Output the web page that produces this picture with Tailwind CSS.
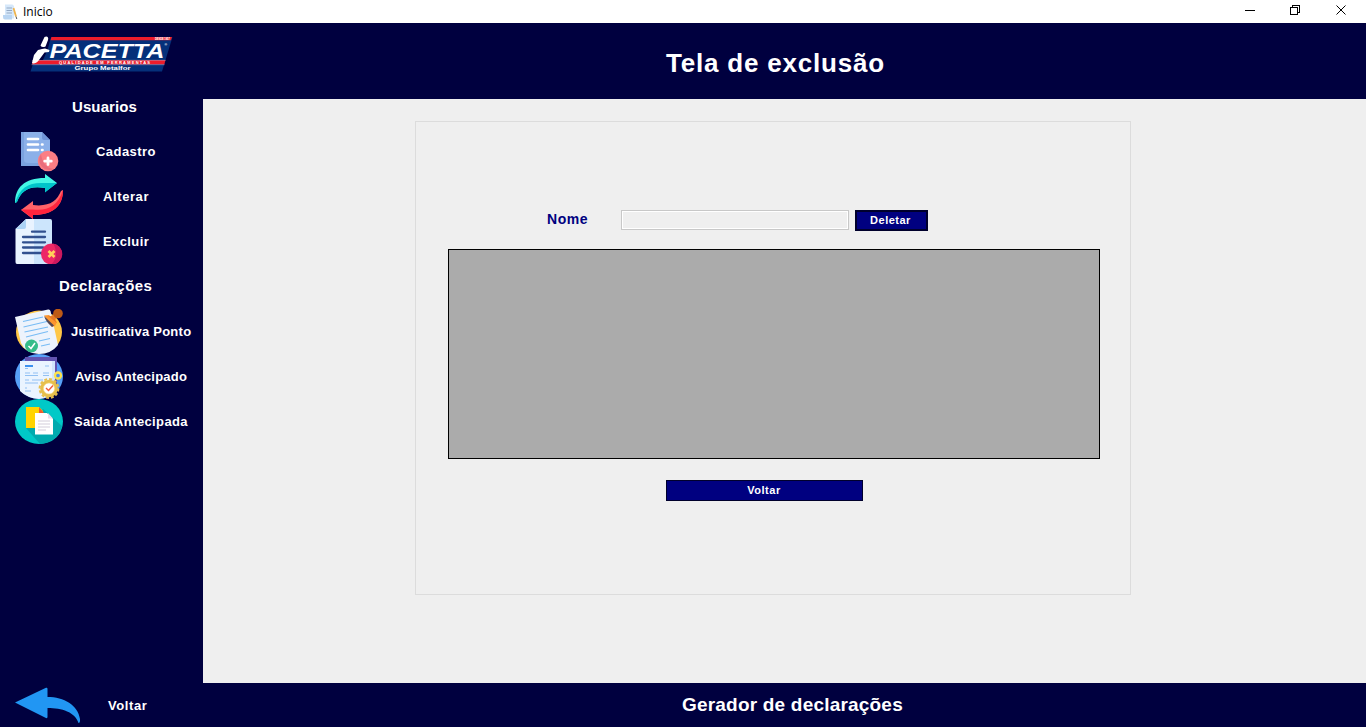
<!DOCTYPE html>
<html lang="pt-BR">
<head>
<meta charset="utf-8">
<title>Inicio</title>
<script src="https://cdn.jsdelivr.net/npm/@tailwindcss/browser@4"></script>
</head>
<body class="w-[1366px] h-[727px] overflow-hidden flex flex-col bg-[#00003f] text-white font-bold font-['Liberation_Sans',sans-serif]">
<!-- Title bar -->
<div class="h-[23px] shrink-0 bg-white flex items-center text-black font-normal">
  <svg class="ml-[2px] w-4 h-4" viewBox="0 0 16 16"><path d="M3 .5H10.500L12 2V14.500H3Z" fill="#d6e8fa"/><path d="M1 11H10V15.500H3Q1 15.500 1 13Z" fill="#b9d5f2"/><path d="M4.500 4H10M4.500 6.500H10M4.500 9H10" stroke="#94a9c4" stroke-width="1"/><path d="M11.500 4 14 12.500" stroke="#efb550" stroke-width="1.800"/><path d="M14 12.500 14.800 15" stroke="#555" stroke-width="1"/></svg>
  <span class="ml-[5px] text-[12px] leading-4 font-['Open_Sans',sans-serif]">Inicio</span>
  <svg class="ml-auto mr-[18px] w-[104px] h-[23px]" viewBox="0 0 104 23" fill="none" stroke="#000" shape-rendering="crispEdges"><path d="M1 10.500H11"/><path d="M46.500 7.500H53.500V14.500H46.500ZM48.500 7V5.500H55.500V12.500H54"/><path d="M92.500 5.500 101.500 14.500M101.500 5.500 92.500 14.500" shape-rendering="auto"/></svg>
</div>
<div class="flex h-[704px]">
  <!-- Sidebar -->
  <aside class="w-[203px] shrink-0 flex flex-col text-[13px]">
    <svg class="ml-[30px] mt-[12px] w-[144px] h-[38px] shrink-0" viewBox="30 35 144 38">
      <path d="M51 37H172.500L162 71.500H30.500L33 64Z" fill="#05307a"/>
      <path d="M51.500 37H172L171 40.200H50.500Z" fill="#ed1c2b"/>
      <path d="M33 60H165.500L164.300 64.500H32Z" fill="#ed1c2b"/>
      <path d="M32 60.300H165.500M31.500 64.700H164.500" stroke="#9db2d8" stroke-width=".5"/>
      <path d="M51 37 47.500 50 43 60H30V35H51Z" fill="#00003f"/>
      <path d="M44.500 37C47 35.500 49 37.500 48 40L45.500 46.500Q42 48 40.500 45.500ZM42 49 45 48.500 49.500 50 49 52 44.500 52.500 39 60C36 64 33 64 32 63L34 55 38 50Z" fill="#fff"/>
      <text x="49.500" y="57.700" font-family="Liberation Sans, sans-serif" font-size="20.500" font-weight="700" font-style="italic" fill="#fff" textLength="115" lengthAdjust="spacingAndGlyphs">PACETTA</text>
      <text x="155" y="39.800" font-family="Liberation Sans, sans-serif" font-size="2.800" fill="#fff" textLength="15">DESDE 1957</text>
      <text x="164.500" y="45.500" font-family="Liberation Sans, sans-serif" font-size="3.500" fill="#fff">®</text>
      <text x="59" y="63.900" font-family="Liberation Sans, sans-serif" font-size="4" font-weight="700" fill="#fff" textLength="91">QUALIDADE EM FERRAMENTAS</text>
      <text x="74.500" y="70" font-family="Liberation Sans, sans-serif" font-size="6" font-weight="700" fill="#fff" textLength="56" lengthAdjust="spacingAndGlyphs">Grupo Metalfor</text>
    </svg>
    <h2 class="mt-[11px] h-[45px] pt-[13px] pl-[72px] text-[15px] leading-[20px] tracking-[.1px]">Usuarios</h2>
    <div class="h-[45px] pl-[15px] flex items-center shrink-0">
      <svg class="w-12 h-[45px]" viewBox="15 129 48 45"><path d="M21 132H42L50 140V166H21Z" fill="#8bb0e9"/><path d="M21 132H24V160Q24 163 28 163H40V166H21Z" fill="#7ba2df"/><path d="M42 132 50 140H44Q42 140 42 138Z" fill="#7194d7"/><path d="M28 139H38M28 144.500H38M28 150H38M42 144.500H42.500M42 150H42.500" stroke="#fff" stroke-width="2.700" stroke-linecap="round"/><circle cx="48" cy="161" r="10.300" fill="#fb7e84"/><path d="M41 154A10.300 10.300 0 0 0 54 169Q43 168 41 154Z" fill="#e96d7c"/><path d="M48 158V164.500M44.700 161.200H51.300" stroke="#fff" stroke-width="2.800" stroke-linecap="round"/></svg>
      <span class="ml-[33px] tracking-[.45px]">Cadastro</span>
    </div>
    <div class="h-[45px] pl-[15px] flex items-center shrink-0">
      <svg class="w-12 h-[45px]" viewBox="15 174 48 45"><path d="M15 203C15 188 24 178 45 178V174L57 183 45 192V188C29 185 21 191 17 202Z" fill="#43f7e5"/><path d="M15 203C20 187 29 182 45 183H57L45 192.500V188C28 185 21 192 17 202Z" fill="#00c4ca"/><path d="M63 190C63 206 53 215 33 215V219L21 210 33 201V205C49 207 57 201 61 191Z" fill="#ff6269"/><path d="M63 190C58 206 48 211 33 209.500H21L33 219V215C54 215 63 205 63 190Z" fill="#ff243d"/></svg>
      <span class="ml-[40px] tracking-[.6px]">Alterar</span>
    </div>
    <div class="h-[45px] pl-[15px] flex items-center shrink-0">
      <svg class="w-12 h-[45px]" viewBox="15 219 48 45"><path d="M26 219H34V264H17Q15.500 264 15.500 262V229Z" fill="#e9f3ff"/><path d="M34 219H50Q52 219 52 221V264H34Z" fill="#cce5fc"/><path d="M26 219V227Q26 229 24 229H15.500Z" fill="#acd2f5"/><path d="M32 231.700H45M23 237H45M23 242.300H45M23 247.500H43M23 253H42" stroke="#31508f" stroke-width="2.300" stroke-linecap="round"/><circle cx="51.500" cy="254" r="10.500" fill="#ed2766"/><path d="M53 243.600A10.500 10.500 0 0 1 51 264.500Q56 260 56 254T53 243.600Z" fill="#cc185e"/><path d="M48.500 251 54.500 257M54.500 251 48.500 257" stroke="#ffd15b" stroke-width="2.700"/></svg>
      <span class="ml-[40px] tracking-[.4px]">Excluir</span>
    </div>
    <h2 class="h-[45px] shrink-0 pt-[12px] pl-[59px] text-[15px] leading-[20px] tracking-[.45px]">Declarações</h2>
    <div class="h-[45px] pl-[15px] flex items-center shrink-0">
      <svg class="w-12 h-[45px]" viewBox="15 309 48 45"><ellipse cx="39" cy="332" rx="23" ry="21.500" fill="#ffc747"/><path d="M15 317 48 309.500Q50 309 50.500 311L58 345Q51 354 39 354 26 354 21 343Z" fill="#edf3fc"/><path d="M23 321.500 43 317M23.500 327 49 321M24.500 332 48 327M26 337 48 331.500M39 341 50 338.500M41 346 50 344" stroke="#78bcf5" stroke-width="1.200"/><path d="M44 315.500 49 315 57 322 55 326 52 327Z" fill="#fb9630"/><path d="M44 316 54 325.500 52 327Q46 322 44 316Z" fill="#554854"/><path d="M48 316Q54 317 54 312L59 317Q53 318 57 323Z" fill="#e87926"/><circle cx="58" cy="313.500" r="4.800" fill="#bd5a16"/><circle cx="31.500" cy="346" r="6.500" fill="#35bc89"/><path d="M28.500 346 31 348.500 35 343" fill="none" stroke="#fff" stroke-width="1.500"/></svg>
      <span class="ml-[8px] tracking-[.25px] whitespace-nowrap">Justificativa Ponto</span>
    </div>
    <div class="h-[45px] pl-[15px] flex items-center shrink-0">
      <svg class="w-12 h-[45px]" viewBox="15 354 48 45"><ellipse cx="39" cy="376.500" rx="24" ry="22.500" fill="#57a0f7"/><path d="M25 357H57V389H25Z" fill="#6254b1"/><path d="M20 361H52V392Q49 398 39 399 27 398 20 391Z" fill="#eaf4ff"/><path d="M52 361H55V386H52Z" fill="#d3e6fb"/><path d="M25 366H33" stroke="#3c91ef" stroke-width="2"/><path d="M25 368.500H28M45 366H49M25 373H30M33 373H38M43 373H49M25 375.500H38M43 375.500H49M25 380H29M32 380H43M25 383H38M25 388H27M25 391H31" stroke="#91c0f3" stroke-width="1.200"/><circle cx="58" cy="375.500" r="3" fill="#4b8df0" stroke="#ffe34d" stroke-width="2.300"/><circle cx="49" cy="388.500" r="8.800" fill="#e7bf4c"/><circle cx="49" cy="388.500" r="9.400" fill="none" stroke="#e7bf4c" stroke-width="2" stroke-dasharray="2.900 2"/><circle cx="49" cy="388.500" r="5.600" fill="#fff" stroke="#f4d779" stroke-width=".6"/><path d="M46 388 48.500 390.500 53 385.500" fill="none" stroke="#f35a3a" stroke-width="1.400"/></svg>
      <span class="ml-[12px] tracking-[.2px] whitespace-nowrap">Aviso Antecipado</span>
    </div>
    <div class="h-[45px] pl-[15px] flex items-center shrink-0">
      <svg class="w-12 h-[45px]" viewBox="15 399 48 45"><ellipse cx="39" cy="421.500" rx="24" ry="22.500" fill="#00c9c7"/><path d="M26 428 40 444Q54 443 60 433L62 426 43 409Z" fill="#00aaae"/><path d="M26 407H39L43 411V428H26Z" fill="#ffd400"/><path d="M39 407 44 413H39Z" fill="#f35b2c"/><path d="M35 413H47L53 419V434.500H35Z" fill="#fff"/><path d="M48 413 53 418.500H48Z" fill="#e9ddea"/><path d="M38 421H50M38 424H50M38 427H50M38 430H46" stroke="#d3cdda" stroke-width="1"/></svg>
      <span class="ml-[11px] tracking-[.38px] whitespace-nowrap">Saida Antecipada</span>
    </div>
    <div class="mt-auto h-[44px] pl-[15px] flex items-center shrink-0">
      <svg class="w-[66px] h-[44px]" viewBox="15 683 66 44"><path d="M15 702.500 46 687.800Q47.500 687.200 47.500 689V697C64 697 78 705 80 719Q80.300 723 78.500 723C75 712 62 708 47.500 708V717Q47.500 718.500 46 718Z" fill="#2196f3"/></svg>
      <span class="ml-[27px] pt-[2px] tracking-[.6px]">Voltar</span>
    </div>
  </aside>
  <!-- Main column -->
  <main class="w-[1163px] flex flex-col">
    <header class="h-[76px] pl-[463px] pt-[24px] text-[26px] leading-[32px] tracking-[.8px]"><h1>Tela de exclusão</h1></header>
    <section class="h-[584px] bg-[#efefef] pl-[212px] pt-[22px]">
      <div class="w-[716px] h-[474px] border border-[#dcdcdc] pl-[32px] pt-[88px]">
        <form class="flex h-[21px]">
          <label for="nome" class="w-[173px] pl-[99px] text-[14px] leading-[19px] tracking-[.55px] text-[#000080]">Nome</label>
          <input id="nome" class="w-[228px] h-5 bg-[#efefef] border border-[#c8c8c8] shadow-[inset_0_0_0_1px_#fff] outline-none">
          <button type="button" class="ml-[6px] w-[73px] h-[21px] bg-[#000080] border-2 border-[#00002c] pr-[2px] text-[11px] leading-[17px] tracking-[.5px] text-white">Deletar</button>
        </form>
        <div class="mt-[18px] w-[652px] h-[210px] bg-[#ababab] border border-black"></div>
        <button class="block mt-[21px] ml-[218px] w-[197px] h-[21px] bg-[#000080] border border-[#00002c] pr-[1px] text-[11px] leading-[19px] tracking-[.5px] text-white">Voltar</button>
      </div>
    </section>
    <footer class="h-[44px] pl-[479px] pt-[10px] text-[19px] leading-[24px] tracking-[.2px]">Gerador de declarações</footer>
  </main>
</div>
</body>
</html>
